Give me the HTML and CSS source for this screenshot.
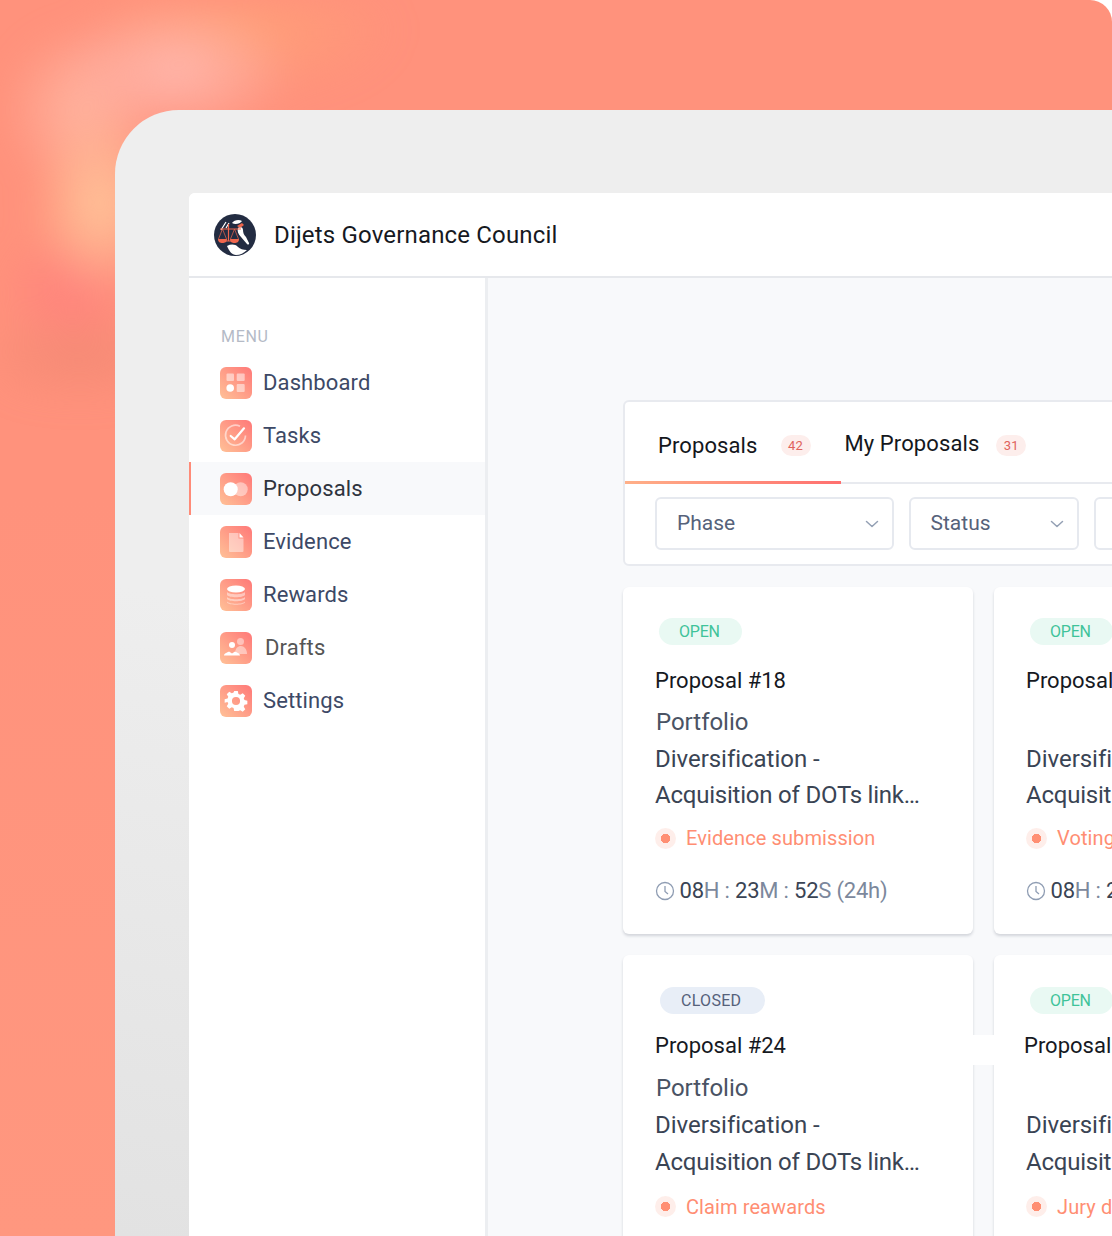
FILE: index.html
```html
<!DOCTYPE html>
<html lang="en">
<head>
<meta charset="utf-8">
<title>Dijets Governance Council</title>
<link rel="stylesheet" href="styles.css">
</head>
<body>
<div class="stage">
  <div class="glow"></div>
  <div class="frame">
    <div class="app">
      <header class="topbar">
        <svg class="logo" viewBox="0 0 42 42">
          <circle cx="21" cy="21" r="21" fill="#232c42"/>
          <path d="M18 9c2-3 7-4 10-2-2 3-7 4-10 2z" fill="#fff"/>
          <path d="M24 14c2-2 5-1 5 2 0 3 1 5 3 7l3 6c.5 1.500-1 2-2 1l-6-7c-3-3-4-6-3-9z" fill="#fff"/>
          <path d="M13 32c4-2 8-2 11 1 2 2 5 3 9 3-3 3-7 5-11 5-4 0-7-4-9-9z" fill="#fff"/>
          <path d="M7 16l5-8M12 14l3-5" stroke="#fff" stroke-width="1.200" fill="none"/>
          <path d="M6 15h21M14.500 10v17M11 27h7" stroke="#f0664d" stroke-width="1.200" fill="none"/>
          <path d="M8.500 15l-4 10m4-10l4 10M20.500 15l-4 10m4-10l4 10" fill="none" stroke="#f0664d" stroke-width=".7"/>
          <path d="M4 25h9c0 3-2 4-4.500 4S4 28 4 25zM16 25h9c0 3-2 4-4.500 4s-4.500-1-4.500-4z" fill="#f0664d"/>
          <path d="M23 12l5-3 2 2-4 3z" fill="#f0664d"/>
        </svg>
        <h1 class="brand">Dijets Governance Council</h1>
      </header>
      <div class="body">
        <aside class="sidebar">
          <div class="menu-label">MENU</div>
          <nav class="nav">
            <a class="nav-item"><span class="nav-icon"><svg viewBox="0 0 32 32"><rect x="6.500" y="6.500" width="7.500" height="7.500" rx="1" fill="#fff" opacity=".5"/><rect x="16.700" y="6.500" width="8" height="7.500" rx="1" fill="#fff" opacity=".5"/><circle cx="10.200" cy="21" r="3.800" fill="#fff"/><rect x="16.700" y="17" width="8" height="8" rx="1" fill="#fff" opacity=".5"/></svg></span><span class="nav-text">Dashboard</span></a>
            <a class="nav-item"><span class="nav-icon"><svg viewBox="0 0 32 32"><path d="M20 6.300A10 10 0 1 0 25.500 15.500" fill="none" stroke="#fff" stroke-width="1.700" opacity=".55"/><path d="M10.700 16l4 3.300 9.300-11" fill="none" stroke="#fff" stroke-width="2.200" stroke-linecap="round" stroke-linejoin="round"/></svg></span><span class="nav-text">Tasks</span></a>
            <a class="nav-item active"><span class="nav-icon"><svg viewBox="0 0 32 32"><circle cx="20.700" cy="16.300" r="7" fill="#fff" opacity=".45"/><circle cx="10.700" cy="16.300" r="7" fill="#fff"/></svg></span><span class="nav-text">Proposals</span></a>
            <a class="nav-item"><span class="nav-icon"><svg viewBox="0 0 32 32"><path d="M9 7h9.500v5.500H23.500V25a1 1 0 0 1-1 1H10a1 1 0 0 1-1-1z" fill="#fff" opacity=".45"/><path d="M19.500 7l4 4.500h-4z" fill="#fff"/></svg></span><span class="nav-text">Evidence</span></a>
            <a class="nav-item"><span class="nav-icon"><svg viewBox="0 0 32 32"><ellipse cx="16" cy="10" rx="9" ry="3.500" fill="#fff"/><path d="M7 13c2 3 16 3 18 0v3c-2 3-16 3-18 0zM7 18c2 3 16 3 18 0v2c-2 3-16 3-18 0zM7 22.500c2 3 16 3 18 0v1c-2 3-16 3-18 0z" fill="#fff" opacity=".45"/></svg></span><span class="nav-text">Rewards</span></a>
            <a class="nav-item"><span class="nav-icon"><svg viewBox="0 0 32 32"><circle cx="20.500" cy="9.500" r="3.500" fill="#fff" opacity=".45"/><path d="M15 22c0-6 3-8 6-8s6 3 6 8z" fill="#fff" opacity=".45"/><circle cx="12" cy="13" r="3" fill="#fff"/><path d="M4 23.500c0-2 3-3 5-4l3 2 3-2c2 1 5 2 5 4z" fill="#fff"/></svg></span><span class="nav-text drafts">Drafts</span></a>
            <a class="nav-item"><span class="nav-icon"><svg viewBox="0 0 32 32"><path transform="translate(1.600 1.600) scale(.9)" fill-rule="evenodd" fill="#fff" d="M14 5h4l.7 3.200 2 .8 2.800-1.700 2.800 2.800-1.700 2.800.8 2 3.200.7v4l-3.200.7-.8 2 1.700 2.800-2.800 2.800-2.800-1.700-2 .8L18 27h-4l-.7-3.200-2-.8-2.800 1.700-2.800-2.800 1.700-2.800-.8-2L3.400 18v-4l3.200-.7.8-2-1.700-2.800 2.800-2.800 2.800 1.700 2-.8zM16 11.500a4.500 4.500 0 1 0 0 9 4.500 4.500 0 0 0 0-9z"/></svg></span><span class="nav-text">Settings</span></a>
          </nav>
        </aside>
        <main class="main">
          <section class="panel">
            <div class="tabs">
              <div class="tab tab-active"><span class="tab-label">Proposals</span><span class="count">42</span></div>
              <div class="tab tab-plain"><span class="tab-label">My Proposals</span><span class="count">31</span></div>
            </div>
            <div class="filters">
              <div class="select select-phase"><span>Phase</span><svg class="chev" viewBox="0 0 14 8"><path d="M1.500 1.500L7 6.500l5.500-5" fill="none" stroke="#94a0b4" stroke-width="1.500" stroke-linecap="round" stroke-linejoin="round"/></svg></div>
              <div class="select select-status"><span>Status</span><svg class="chev" viewBox="0 0 14 8"><path d="M1.500 1.500L7 6.500l5.500-5" fill="none" stroke="#94a0b4" stroke-width="1.500" stroke-linecap="round" stroke-linejoin="round"/></svg></div>
              <div class="select select-more"></div>
            </div>
          </section>
          <div class="cards">
            <article class="card">
              <span class="pill pill-open">OPEN</span>
              <h2 class="card-title">Proposal #18</h2>
              <p class="card-desc"><span class="line-first">Portfolio</span><span>Diversification -</span><span class="line-last">Acquisition of DOTs link…</span></p>
              <div class="phase"><span class="dot"></span><span>Evidence submission</span></div>
              <div class="timer"><svg class="clock" viewBox="0 0 20 20"><circle cx="10" cy="10" r="8.500" fill="none" stroke="#8f9db3" stroke-width="1.300"/><path d="M10 5v5.500l3 2.500" fill="none" stroke="#8f9db3" stroke-width="1.300"/></svg><span><b>08</b>H : <b>23</b>M : <b>52</b>S (24h)</span></div>
            </article>
            <article class="card">
              <span class="pill pill-open">OPEN</span>
              <h2 class="card-title">Proposal #19</h2>
              <p class="card-desc"><span class="line-first">&nbsp;</span><span>Diversification -</span><span class="line-last">Acquisition of DOTs link…</span></p>
              <div class="phase"><span class="dot"></span><span>Voting</span></div>
              <div class="timer"><svg class="clock" viewBox="0 0 20 20"><circle cx="10" cy="10" r="8.500" fill="none" stroke="#8f9db3" stroke-width="1.300"/><path d="M10 5v5.500l3 2.500" fill="none" stroke="#8f9db3" stroke-width="1.300"/></svg><span><b>08</b>H : <b>23</b>M : <b>52</b>S (24h)</span></div>
            </article>
            <article class="card card-low">
              <span class="pill pill-closed">CLOSED</span>
              <h2 class="card-title">Proposal #24</h2>
              <p class="card-desc"><span class="line-first">Portfolio</span><span>Diversification -</span><span class="line-last">Acquisition of DOTs link…</span></p>
              <div class="phase"><span class="dot"></span><span>Claim reawards</span></div>
            </article>
            <article class="card card-low card-patched">
              <span class="pill pill-open">OPEN</span>
              <h2 class="card-title">Proposal #25</h2>
              <p class="card-desc"><span class="line-first">&nbsp;</span><span>Diversification -</span><span class="line-last">Acquisition of DOTs link…</span></p>
              <div class="phase"><span class="dot"></span><span>Jury decision</span></div>
            </article>
          </div>
        </main>
      </div>
    </div>
  </div>
</div>
</body>
</html>
```
FILE: styles.css
```css
* { box-sizing: border-box; }
html, body { margin: 0; height: 100%; background: #fff; overflow: hidden; }
body { font-family: "Roboto", "Noto Sans", sans-serif; }
.stage {
  position: relative; width: 1112px; height: 1236px; overflow: hidden;
  padding: 110px 0 0 115px;
  background: linear-gradient(180deg, #ff927c 0%, #ff927c 40%, #ff977f 100%);
  border-top-right-radius: 22px;
}
.glow {
  position: absolute; left: 0; top: 0; width: 420px; height: 460px;
  filter: blur(16px);
  background:
    radial-gradient(ellipse 70px 95px at 100px 205px, rgba(255,198,155,.98), rgba(255,190,150,0) 100%),
    radial-gradient(ellipse 120px 70px at 175px 70px, rgba(255,184,174,.98), rgba(255,180,170,0) 100%),
    radial-gradient(ellipse 80px 85px at 80px 110px, rgba(255,185,165,.85), rgba(255,185,165,0) 100%),
    radial-gradient(ellipse 75px 60px at 70px 290px, rgba(255,122,125,.65), rgba(255,125,125,0) 100%),
    radial-gradient(ellipse 120px 50px at 80px 355px, rgba(230,128,108,.42), rgba(225,125,110,0) 100%),
    radial-gradient(ellipse 160px 70px at 240px 30px, rgba(255,165,118,.7), rgba(255,165,115,0) 100%);
}
.frame {
  position: relative; height: 1126px; width: 997px; padding: 83px 0 0 74px;
  background: linear-gradient(190deg, #eeeeee 50%, #e2e2e2 100%);
  border-top-left-radius: 64px;
  overflow: hidden;
}
.app { width: 1200px; height: 1043px; display: flex; flex-direction: column; border-top-left-radius: 6px; overflow: hidden; background: #fff; }
.topbar { height: 85px; flex: none; display: flex; align-items: center; gap: 18px; padding-left: 25px; background: #fff; border-bottom: 2px solid #e6e8ec; }
.logo { width: 42px; height: 42px; flex: none; }
.brand { margin: 0; font-size: 24px; line-height: 30px; font-weight: 400; color: #16191f; letter-spacing: .17px; }
.body { flex: 1; display: flex; min-height: 0; }
.sidebar { width: 299px; flex: none; padding-top: 49px; background: #fff; border-right: 3px solid #eceef1; }
.menu-label { font-size: 16px; line-height: 20px; color: #b4bac6; letter-spacing: .7px; padding-left: 32px; margin-bottom: 9px; }
.nav { display: flex; flex-direction: column; }
.nav-item { height: 53px; display: flex; align-items: center; gap: 11px; padding-left: 31px; color: #3d4966; font-size: 22px; letter-spacing: .12px; }
.nav-item.active { background: #f8f9fb; box-shadow: inset 2px 0 0 #ff8b78; color: #2f343e; }
.nav-icon { width: 32px; height: 32px; flex: none; border-radius: 6px; background: linear-gradient(45deg, #ffc197 0%, #ff7878 100%); display: block; }
.nav-icon svg { display: block; width: 32px; height: 32px; }
.drafts { margin-left: 2px; color: #555; }
.main { flex: 1; background: #f8f9fb; padding: 122px 0 0 135px; display: flex; flex-direction: column; gap: 21px; min-width: 0; }
.panel { width: 580px; height: 166px; flex: none; background: #fff; border: 2px solid #e8eaef; border-radius: 6px; }
.tabs { height: 82px; display: flex; border-bottom: 2px solid #e8eaef; }
.tab { display: flex; align-items: center; font-size: 22px; color: #14171c; letter-spacing: .1px; }
.tab-active { width: 216px; gap: 23px; padding: 8px 0 0 33px; margin-bottom: -2px; border-bottom: 3px solid; border-image: linear-gradient(90deg, #ffb088, #ff6f6f) 1; }
.tab-plain { gap: 17px; padding: 6px 0 0 3.500px; }
.tab-plain .tab-label { position: relative; top: -2px; }
.count { width: 30px; height: 21px; border-radius: 11px; background: #fdeeec; color: #e0635c; font-size: 13px; line-height: 21px; text-align: center; letter-spacing: .3px; }
.filters { display: flex; gap: 15px; padding: 13px 0 0 30px; }
.select { height: 53px; border: 2px solid #e6e9ef; border-radius: 6px; display: flex; align-items: center; justify-content: space-between; font-size: 21px; color: #56627a; letter-spacing: 0; padding: 0 13px 2px 20px; background: #fff; }
.select-phase { width: 238.500px; }
.select-status { width: 170px; }
.select-more { width: 100px; }
.chev { width: 14px; height: 8px; margin-top: 2px; }
.cards { display: grid; grid-template-columns: 350px 350px; gap: 21px; }
.card { position: relative; height: 347px; background: #fff; border-radius: 6px; box-shadow: 0 2px 3px rgba(40,50,70,.18); padding: 31px 20px 0 32px; display: flex; flex-direction: column; align-items: flex-start; }
.pill { height: 27px; border-radius: 14px; font-size: 16px; line-height: 27px; letter-spacing: -.2px; padding: 0 22px 0 20px; margin-left: 4px; }
.pill-open { background: #e9f9f3; color: #3fc39a; }
.pill-closed { background: #e8eef7; color: #55617a; margin-left: 5px; letter-spacing: .3px; padding: 0 24px 0 21px; }
.card-title { margin: 21px 0 0; font-size: 22px; line-height: 30px; font-weight: 400; color: #16191f; letter-spacing: 0; }
.card-desc { margin: 8px 0 0; display: flex; flex-direction: column; font-size: 24px; line-height: 36.500px; color: #3a4454; letter-spacing: -.03px; white-space: nowrap; }
.line-first { margin-left: 1px; color: #4a5364; }
.line-last { letter-spacing: -.22px; }
.phase { display: flex; align-items: center; gap: 10px; margin-top: 9.500px; font-size: 20px; line-height: 30px; color: #ff8e73; letter-spacing: .1px; white-space: nowrap; }
.dot { width: 21px; height: 21px; border-radius: 50%; background: radial-gradient(circle, #ff8f73 0 4.500px, #feeeea 5px); flex: none; }
.timer { display: flex; align-items: center; gap: 5px; margin-left: -.500px; margin-top: 23px; font-size: 22px; line-height: 30px; color: #7c889c; letter-spacing: -.2px; white-space: nowrap; }
.timer b { font-weight: 400; color: #3a4454; }
.clock { width: 20px; height: 20px; flex: none; }
.card-low .pill { margin-top: 1px; }
.card-low .card-title { margin-top: 17px; }
.card-low .card-desc { margin-top: 9px; line-height: 37px; }
.card-low .phase { margin-top: 10.500px; }
.card-patched::before { content: ""; position: absolute; left: -21px; top: 80px; width: 21px; height: 30px; background: #fff; }
.card-patched .card-title { margin-left: -2px; }
```
